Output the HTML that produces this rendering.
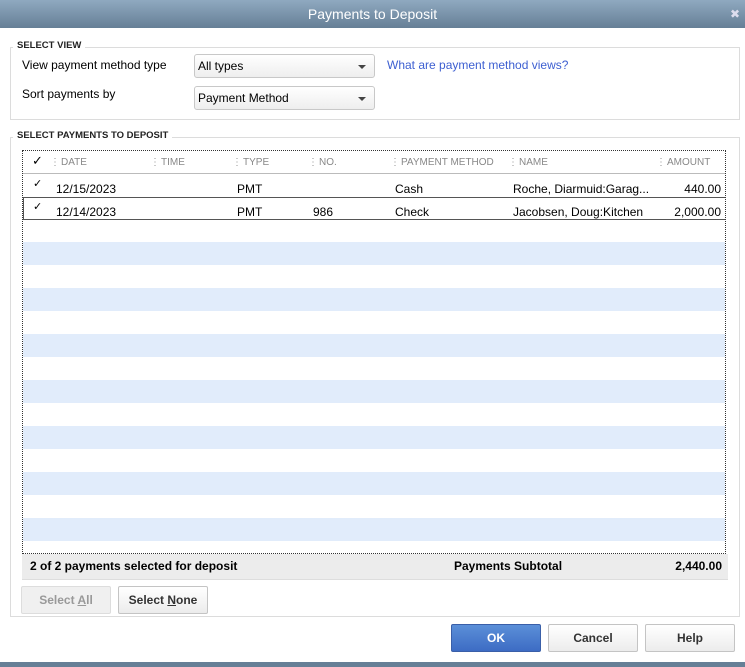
<!DOCTYPE html>
<html><head><style>
*{margin:0;padding:0;box-sizing:border-box}
body{width:745px;height:667px;background:#fff;font-family:"Liberation Sans",Arial,sans-serif;font-size:12px;color:#000;position:relative;overflow:hidden}
.a{position:absolute}
.title{left:0;top:0;width:745px;height:28px;background:linear-gradient(#8fa9c0,#667f96);color:#fff;font-size:14px;text-align:center;line-height:29px}
.grp{border:1px solid #dcdcdc}
.lbl{font-size:9.5px;font-weight:bold;background:#fff;padding:0 4px;color:#222}
.sel{border:1px solid #c8c8c8;border-radius:3px;background:linear-gradient(#fff,#eee);padding-left:3px;line-height:22px}
.sel:after{content:"";position:absolute;right:8px;top:10px;border-left:4px solid transparent;border-right:4px solid transparent;border-top:4px solid #444}
.hd{font-size:10px;color:#888;top:157px}
.hd:before{content:"⋮";margin-right:1px;color:#999}
.btn{border:1px solid #c4c4c4;border-radius:2px;background:linear-gradient(#fff,#ececec);text-align:center;font-weight:bold;font-size:12px;color:#333}
.st{left:0;width:704px;height:23px;background:#e1ecfb}
</style></head><body>
<div class="a title">Payments to Deposit<span style="position:absolute;right:5px;top:0;font-size:12px;color:#dde">✖</span></div>

<div class="a grp" style="left:10px;top:47px;width:730px;height:73px"></div>
<div class="a lbl" style="left:13px;top:40px">SELECT VIEW</div>
<div class="a" style="left:22px;top:58px">View payment method type</div>
<div class="a" style="left:22px;top:87px">Sort payments by</div>
<div class="a sel" style="left:194px;top:54px;width:181px;height:24px">All types</div>
<div class="a sel" style="left:194px;top:86px;width:181px;height:24px">Payment Method</div>
<div class="a" style="left:387px;top:58px;color:#3d5fd1">What are payment method views?</div>

<div class="a grp" style="left:10px;top:137px;width:730px;height:480px"></div>
<div class="a lbl" style="left:13px;top:130px">SELECT PAYMENTS TO DEPOSIT</div>

<div class="a" style="left:22px;top:150px;width:704px;height:404px;border:1px dotted #333;overflow:hidden">
<div class="a" style="left:0;top:0;width:704px;height:23px;border-bottom:1px solid #bbb"></div>
<div class="a st" style="top:91px"></div>
<div class="a st" style="top:137px"></div>
<div class="a st" style="top:183px"></div>
<div class="a st" style="top:229px"></div>
<div class="a st" style="top:275px"></div>
<div class="a st" style="top:321px"></div>
<div class="a st" style="top:367px"></div>
<div class="a" style="left:0;top:46px;width:703px;height:23px;border:1px solid #555"></div>
</div>
<div class="a" style="left:32px;top:153px;font-size:13px">✓</div>
<div class="a hd" style="left:50px">DATE</div>
<div class="a hd" style="left:150px">TIME</div>
<div class="a hd" style="left:232px">TYPE</div>
<div class="a hd" style="left:308px">NO.</div>
<div class="a hd" style="left:390px">PAYMENT METHOD</div>
<div class="a hd" style="left:508px">NAME</div>
<div class="a hd" style="left:656px">AMOUNT</div>

<div class="a" style="left:33px;top:177px;font-size:11px">✓</div>
<div class="a" style="left:56px;top:182px">12/15/2023</div>
<div class="a" style="left:237px;top:182px">PMT</div>
<div class="a" style="left:395px;top:182px">Cash</div>
<div class="a" style="left:513px;top:182px">Roche, Diarmuid:Garag...</div>
<div class="a" style="left:640px;top:182px;width:81px;text-align:right">440.00</div>
<div class="a" style="left:33px;top:200px;font-size:11px">✓</div>
<div class="a" style="left:56px;top:205px">12/14/2023</div>
<div class="a" style="left:237px;top:205px">PMT</div>
<div class="a" style="left:313px;top:205px">986</div>
<div class="a" style="left:395px;top:205px">Check</div>
<div class="a" style="left:513px;top:205px">Jacobsen, Doug:Kitchen</div>
<div class="a" style="left:640px;top:205px;width:81px;text-align:right">2,000.00</div>

<div class="a" style="left:22px;top:554px;width:706px;height:26px;background:#ececec;border-bottom:1px solid #ddd;font-weight:bold;font-size:12px;line-height:24px">
<span class="a" style="left:8px">2 of 2 payments selected for deposit</span>
<span class="a" style="left:432px">Payments Subtotal</span>
<span class="a" style="right:6px">2,440.00</span></div>

<div class="a btn" style="left:21px;top:586px;width:90px;height:28px;line-height:26px;color:#999;background:#f0f0f0;border-color:#ddd">Select <u>A</u>ll</div>
<div class="a btn" style="left:118px;top:586px;width:90px;height:28px;line-height:26px">Select <u>N</u>one</div>

<div class="a btn" style="left:451px;top:624px;width:90px;height:28px;line-height:26px;background:linear-gradient(#5b8fd8,#3d6cc4);border-color:#3a5fa8;color:#fff">OK</div>
<div class="a btn" style="left:548px;top:624px;width:90px;height:28px;line-height:26px">Cancel</div>
<div class="a btn" style="left:645px;top:624px;width:90px;height:28px;line-height:26px">Help</div>

<div class="a" style="left:0;top:662px;width:745px;height:5px;background:#667f96"></div>
</body></html>
